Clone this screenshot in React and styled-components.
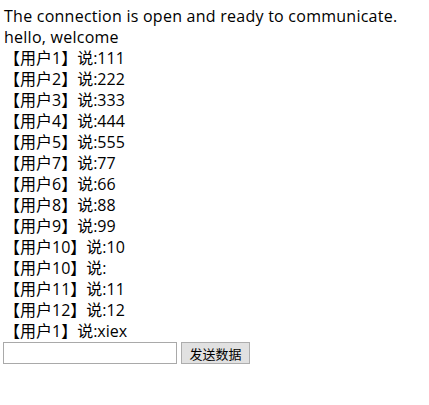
import styled, { createGlobalStyle } from "styled-components";

const GlobalStyle = createGlobalStyle`
  body {
    margin: 3px;
    padding-top: 3px;
    background: #ffffff;
    color: #000000;
    font-family: "Open Sans", "Noto Sans CJK SC", sans-serif;
    font-size: 16px;
  }
`;

const Log = styled.div`
  display: flex;
  flex-direction: column;
`;

const Line = styled.div`
  line-height: 21px;
  height: 21px;
  padding-left: 1px;
  white-space: nowrap;
  letter-spacing: ${(props) => (props.latin ? "0.25px" : "0")};
`;

const Form = styled.div`
  display: flex;
  align-items: center;
  gap: 4px;
`;

const TextInput = styled.input`
  box-sizing: border-box;
  width: 174px;
  height: 22px;
  border: 1px solid #a9a9a9;
  padding: 1px 2px;
  font-size: 13px;
  outline: none;
`;

const SendButton = styled.button`
  box-sizing: border-box;
  width: 69px;
  height: 22px;
  padding: 0;
  border: 1px solid #adadad;
  background: #e1e1e1;
  color: #000000;
  font-family: "Noto Sans CJK SC", sans-serif;
  font-size: 13px;
`;

const messages = [
  "The connection is open and ready to communicate.",
  "hello, welcome",
  "【用户1】说:111",
  "【用户2】说:222",
  "【用户3】说:333",
  "【用户4】说:444",
  "【用户5】说:555",
  "【用户7】说:77",
  "【用户6】说:66",
  "【用户8】说:88",
  "【用户9】说:99",
  "【用户10】说:10",
  "【用户10】说:",
  "【用户11】说:11",
  "【用户12】说:12",
  "【用户1】说:xiex",
];

export default function App() {
  return (
    <>
      <GlobalStyle />
      <Log>
        {messages.map((m, i) => (
          <Line key={i} latin={i < 2}>
            {m}
          </Line>
        ))}
      </Log>
      <Form>
        <TextInput type="text" />
        <SendButton>发送数据</SendButton>
      </Form>
    </>
  );
}
